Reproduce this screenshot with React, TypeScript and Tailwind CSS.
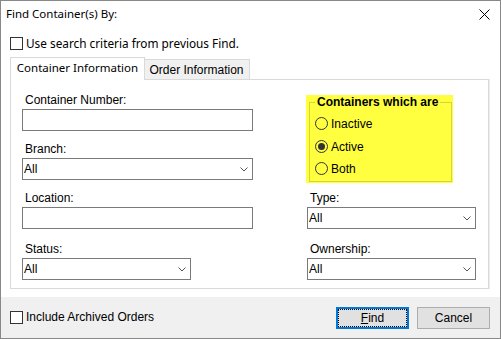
import React from "react";

const ms = "font-['Liberation_Sans',Arial,sans-serif] text-[12px] leading-[14px] text-black";
const segoe = "font-['Noto_Sans',sans-serif] text-[11.5px] text-black";

function Chevron() {
  return (
    <svg width="8" height="5" viewBox="0 0 8 5" className="mr-[4px] shrink-0">
      <path d="M0.5 0.5 L4 4 L7.5 0.5" fill="none" stroke="#555" strokeWidth="1" />
    </svg>
  );
}

function Select({ w }: { w: string }) {
  return (
    <div className={`${w} h-[22px] border border-[#7a7a7a] bg-white flex items-center justify-between pl-[1px]`}>
      <span className={ms}>All</span>
      <Chevron />
    </div>
  );
}

function Input() {
  return <div className="w-[231px] h-[22px] border border-[#7a7a7a] bg-white" />;
}

function Label({ text, mt }: { text: string; mt: string }) {
  return <div className={`${ms} ${mt} h-[14px] pl-[3px]`}>{text}</div>;
}

function Checkbox() {
  return <div className="w-[13px] h-[13px] border border-[#333] bg-white shrink-0" />;
}

function Radio({ checked, label, mt }: { checked?: boolean; label: string; mt: string }) {
  return (
    <div className={`flex items-center h-[13px] ${mt}`}>
      <div className="w-[13px] h-[13px] rounded-full border border-[#333] flex items-center justify-center shrink-0">
        {checked && <div className="w-[7px] h-[7px] rounded-full bg-[#333]" />}
      </div>
      <span className={`${ms} ml-[3px]`}>{label}</span>
    </div>
  );
}

export default function App() {
  return (
    <div className="w-[501px] h-[339px] bg-white border border-[#888] flex flex-col box-border overflow-hidden">
      {/* Title */}
      <div className="h-[36px] flex items-start justify-between pl-[5px] pr-[10px] pt-[5px] shrink-0">
        <span className={`${segoe} leading-[16px]`}>Find Container(s) By:</span>
        <svg width="11" height="11" viewBox="0 0 11 11" className="mt-[3px]">
          <path d="M0.5 0.5 L10.5 10.5 M10.5 0.5 L0.5 10.5" stroke="#000" strokeWidth="1" />
        </svg>
      </div>
      {/* Use search criteria */}
      <div className="h-[13px] flex items-center pl-[9px] shrink-0">
        <Checkbox />
        <span className="font-['Noto_Sans',sans-serif] text-[11.8px] text-black leading-[13px] ml-[3px]">Use search criteria from previous Find.</span>
      </div>
      {/* Tabs */}
      <div className="mt-[7px] ml-[9px] h-[22px] flex items-end shrink-0">
        <div className="relative z-10 w-[135px] h-[23px] -mb-[1px] bg-white border-t border-l border-r border-[#d9d9d9] flex items-center justify-center pb-[3px]">
          <span className={`${segoe} leading-[16px]`}>Container Information</span>
        </div>
        <div className="-ml-[1px] w-[106px] h-[20px] bg-[#f0f0f0] border-t border-r border-[#d9d9d9] flex items-center justify-center">
          <span className={ms}>Order Information</span>
        </div>
      </div>
      {/* Panel */}
      <div className="ml-[9px] w-[479px] h-[210px] border border-[#d9d9d9] shadow-[1px_0_0_#ebebeb] flex pl-[11px] shrink-0">
        <div className="w-[231px] flex flex-col">
          <Label text="Container Number:" mt="mt-[13px]" />
          <div className="mt-[2px]"><Input /></div>
          <Label text="Branch:" mt="mt-[11px]" />
          <div className="mt-[2px]"><Select w="w-[231px]" /></div>
          <Label text="Location:" mt="mt-[11px]" />
          <div className="mt-[2px]"><Input /></div>
          <Label text="Status:" mt="mt-[13px]" />
          <div className="mt-[2px]"><Select w="w-[169px]" /></div>
        </div>
        <div className="ml-[53px] w-[171px] flex flex-col">
          <div className="mt-[15px] w-[147px] h-[88px] bg-[#ffff40] flex">
            <fieldset className="ml-[3px] mr-[1px] mb-[1px] flex-1 border border-[#d6d630] pl-[5px] pr-0 pb-0 m-0 min-w-0">
              <legend className={`${ms} font-bold px-[2px] leading-[14px]`}>Containers which are</legend>
              <Radio label="Inactive" mt="mt-[8px]" />
              <Radio label="Active" checked mt="mt-[10px]" />
              <Radio label="Both" mt="mt-[9px]" />
            </fieldset>
          </div>
          <div className={`${ms} mt-[8px] h-[14px] pl-[4px]`}>Type:</div>
          <div className="mt-[2px] ml-[1px]"><Select w="w-[169px]" /></div>
          <div className={`${ms} mt-[13px] h-[14px] pl-[4px]`}>Ownership:</div>
          <div className="mt-[2px] ml-[1px]"><Select w="w-[169px]" /></div>
        </div>
      </div>
      {/* Footer */}
      <div className="mt-[8px] flex-1 bg-[#f0f0f0] flex items-start">
        <div className="flex items-center pl-[9px] pt-[13px]">
          <Checkbox />
          <span className={`${ms} leading-[13px] ml-[3px]`}>Include Archived Orders</span>
        </div>
        <div className="ml-auto flex gap-[8px] pt-[10px] pr-[10px]">
          <button className="relative w-[73px] h-[22px] bg-[#e1e1e1] border-2 border-[#0078d7] flex items-center justify-center">
            <span className="absolute inset-0 border border-dotted border-black" />
            <span className={ms}><span className="underline">F</span>ind</span>
          </button>
          <button className="w-[73px] h-[22px] bg-[#e1e1e1] border border-[#adadad] flex items-center justify-center">
            <span className={ms}>Cancel</span>
          </button>
        </div>
      </div>
    </div>
  );
}
